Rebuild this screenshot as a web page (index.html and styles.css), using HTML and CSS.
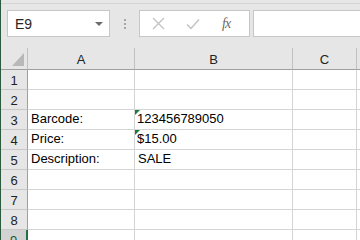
FILE: index.html
```html
<!DOCTYPE html>
<html lang="en">

<head>
    <meta charset="UTF-8">
    <title>Sheet</title>
    <link rel="stylesheet" href="styles.css">
</head>

<body>
    <div class="window">
        <div class="ribbon-edge"></div>
        <div class="formula-bar">
            <div class="name-box">
                <span class="name">E9</span>
                <span class="drop"></span>
            </div>
            <div class="grip">
                <i></i><i></i><i></i>
            </div>
            <div class="fx-box">
                <svg class="cancel" width="13" height="13" viewBox="0 0 13 13">
                    <path d="M1 1 L12 12 M12 1 L1 12" stroke="#c2c2c2" stroke-width="1.3" fill="none" />
                </svg>
                <svg class="enter" width="14" height="12" viewBox="0 0 14 12">
                    <path d="M1 6.5 L5 10.5 L13 1.5" stroke="#c2c2c2" stroke-width="1.4" fill="none" />
                </svg>
                <span class="fx">fx</span>
            </div>
            <div class="formula-input"></div>
        </div>

        <div class="sheet">
            <!-- шапка столбцов -->
            <div class="hdr corner"><span class="tri"></span></div>
            <div class="hdr col">A</div>
            <div class="hdr col">B</div>
            <div class="hdr col">C</div>
            <div class="hdr col last"></div>

            <div class="hdr row">1</div>
            <div class="cell"></div><div class="cell"></div><div class="cell"></div><div class="cell last"></div>

            <div class="hdr row">2</div>
            <div class="cell"></div><div class="cell"></div><div class="cell"></div><div class="cell last"></div>

            <div class="hdr row">3</div>
            <div class="cell">Barcode:</div>
            <div class="cell flag">123456789050</div>
            <div class="cell"></div><div class="cell last"></div>

            <div class="hdr row">4</div>
            <div class="cell">Price:</div>
            <div class="cell flag">$15.00</div>
            <div class="cell"></div><div class="cell last"></div>

            <div class="hdr row">5</div>
            <div class="cell">Description:</div>
            <div class="cell">SALE</div>
            <div class="cell"></div><div class="cell last"></div>

            <div class="hdr row">6</div>
            <div class="cell"></div><div class="cell"></div><div class="cell"></div><div class="cell last"></div>

            <div class="hdr row">7</div>
            <div class="cell"></div><div class="cell"></div><div class="cell"></div><div class="cell last"></div>

            <div class="hdr row">8</div>
            <div class="cell"></div><div class="cell"></div><div class="cell"></div><div class="cell last"></div>

            <div class="hdr row active">9</div>
            <div class="cell"></div><div class="cell"></div><div class="cell"></div><div class="cell last"></div>
        </div>
    </div>
</body>

</html>
```

FILE: styles.css
```css
body {
    margin: 0;
    overflow: hidden;
    font-family: "Liberation Sans", Arial, sans-serif;
}

.window {
    width: 360px;
    height: 240px;
    overflow: hidden;
    background-color: #e6e6e6;
    border-left: 1px solid #2b5a3f;
    box-sizing: border-box;
}

.ribbon-edge {
    height: 3px;
    border-bottom: 1px solid #d4d4d4;
}

.formula-bar {
    display: flex;
    align-items: center;
    height: 44px;
    padding: 0 0 0 6px;
    box-sizing: border-box;
}

.name-box {
    display: flex;
    align-items: center;
    justify-content: space-between;
    width: 103px;
    height: 27px;
    box-sizing: border-box;
    background-color: white;
    border: 1px solid #c6c6c6;
    padding: 0 6px 0 7px;
    margin-bottom: 5px;
}

.name {
    font-size: 14px;
    color: #262626;
}

.drop {
    width: 0;
    height: 0;
    border-left: 4px solid transparent;
    border-right: 4px solid transparent;
    border-top: 4px solid #6d6d6d;
}

.grip {
    display: flex;
    flex-direction: column;
    gap: 2px;
    margin: 0 13px 5px 14px;
}

.grip i {
    display: block;
    width: 2px;
    height: 2px;
    background-color: #a6a6a6;
}

.fx-box {
    display: flex;
    align-items: center;
    width: 111px;
    height: 27px;
    box-sizing: border-box;
    background-color: white;
    border: 1px solid #c6c6c6;
    margin-bottom: 5px;
}

.cancel {
    margin-left: 12px;
}

.enter {
    margin-left: 21px;
}

.fx {
    margin-left: 22px;
    font-family: "Liberation Serif", serif;
    font-style: italic;
    font-size: 14px;
    color: #6b6b6b;
    letter-spacing: -1px;
}

.formula-input {
    flex: 1;
    height: 27px;
    box-sizing: border-box;
    margin-left: 3px;
    margin-bottom: 5px;
    background-color: white;
    border: 1px solid #c6c6c6;
    border-right: none;
}

.sheet {
    display: grid;
    grid-template-columns: 27px 107px 158px 64px 1fr;
    grid-template-rows: 22px repeat(9, 20px);
    background-color: white;
    font-size: 13px;
    color: #000;
}

.hdr {
    background-color: #e6e6e6;
    box-sizing: border-box;
    display: flex;
    align-items: center;
    justify-content: center;
    color: #222;
}

.col {
    border-right: 1px solid #c0c0c0;
    border-bottom: 1px solid #9f9f9f;
    padding-top: 1px;
}

.col.last {
    border-right: none;
}

.corner {
    border-right: 1px solid #c0c0c0;
    border-bottom: 1px solid #9f9f9f;
    position: relative;
}

.tri {
    position: absolute;
    right: 3px;
    bottom: 3px;
    width: 0;
    height: 0;
    border-left: 12px solid transparent;
    border-bottom: 13px solid #b8b8b8;
}

.row {
    border-right: 1px solid #9f9f9f;
    border-bottom: 1px solid #c8c8c8;
    padding-top: 1px;
}

.row.active {
    background-color: #d2d2d2;
    border-right: 2px solid #217346;
    color: #185c37;
}

.cell {
    box-sizing: border-box;
    border-right: 1px solid #d4d4d4;
    border-bottom: 1px solid #d4d4d4;
    display: flex;
    align-items: flex-end;
    padding: 0 0 3px 3px;
    white-space: nowrap;
    position: relative;
}

.cell.last {
    border-right: none;
}

.flag {
    padding-left: 2px;
}

/* зелёный треугольник ошибки */
.flag::before {
    content: "";
    position: absolute;
    left: 0;
    top: 0;
    border-top: 5px solid #1e7b3e;
    border-right: 5px solid transparent;
}
```
